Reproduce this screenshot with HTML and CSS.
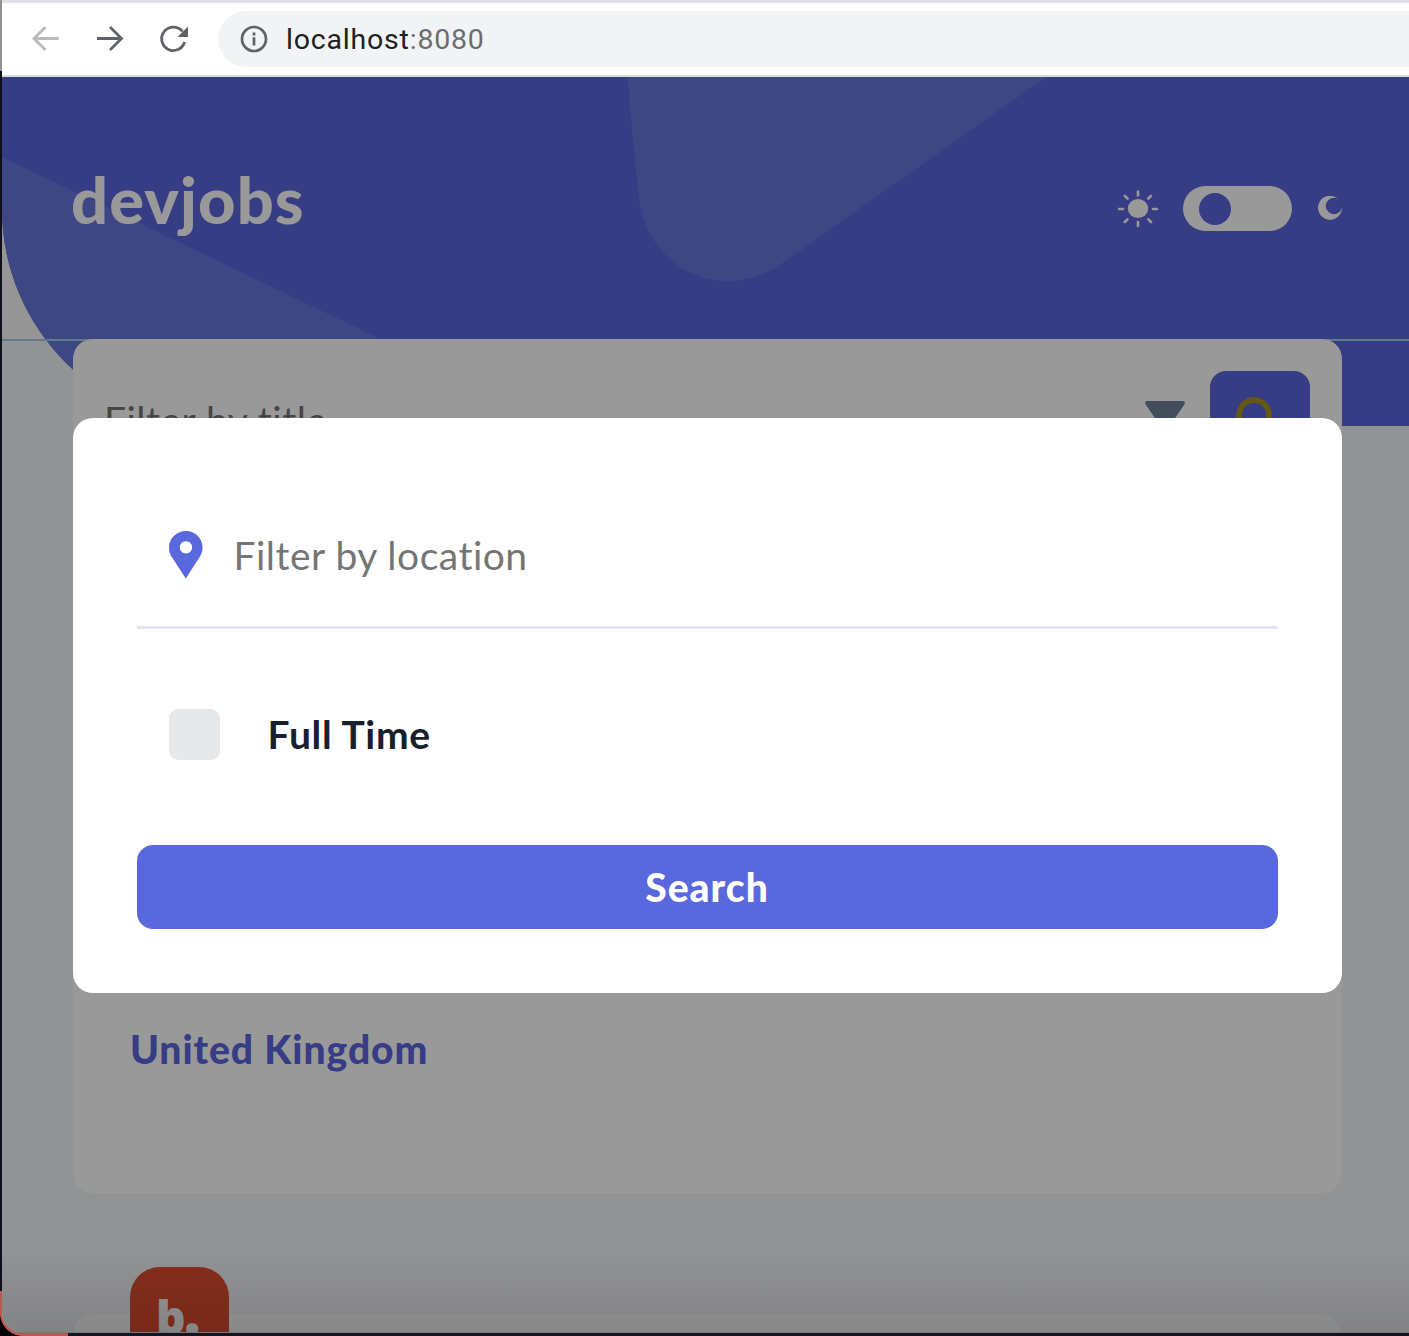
FILE: index.html
```html
<!DOCTYPE html>
<html lang="en">
<head>
<meta charset="utf-8">
<title>devjobs</title>
<link rel="stylesheet" href="styles.css">
</head>
<body>
<div class="desktop">
  <div class="browser">
    <nav class="toolbar">
      <svg class="tool back" width="32" height="32" viewBox="0 0 32 32"><path d="M28.800 15.500H5M15.500 4L4 15.500L15.500 27"/></svg>
      <svg class="tool" width="32" height="32" viewBox="0 0 32 32"><path d="M3 15.500H27M16 4L27.500 15.500L16 27"/></svg>
      <svg class="tool" width="32" height="32" viewBox="0 0 32 32"><path d="M26.600 19A11.700 11.700 0 1 1 24.500 8.500"/><path class="solid" d="M30 3.500V14H19.500Z"/></svg>
      <div class="address">
        <svg class="info" width="28" height="28" viewBox="0 0 28 28"><circle cx="14" cy="14" r="12"/><path d="M14 12.300V20.500M14 7.500V10.500"/></svg>
        <span class="url">localhost<span class="port">:8080</span></span>
      </div>
    </nav>
    <main class="viewport">
      <header class="header">
        <svg class="pattern" width="1407" height="349" viewBox="0 0 1407 349"><path d="M0 80L400 272.500V349H0Z"/><path d="M625 0L636 113C640 167 678 204 725 204C744 204 763 198 779 187L1044 0Z"/></svg>
        <h1 class="logo">devjobs</h1>
        <div class="theme">
          <svg width="40" height="38" viewBox="0 0 40 38"><ellipse cx="20" cy="18.500" rx="10.200" ry="9.600"/><path class="rays" d="M20 1.500V5.500M20 32V36M1 19H5M35 19H39M6.800 5.800L9.500 8.500M33 5.800L30.300 8.500M6.800 32L9.500 29.300M33 32L30.300 29.300"/></svg>
          <div class="switch"><span class="knob"></span></div>
          <svg class="moon" width="24" height="24" viewBox="0 0 24 24"><path d="M20 2.800A12 12 0 1 0 24 11.500A8.200 8.200 0 1 1 20 2.800Z"/></svg>
        </div>
      </header>
      <div class="rule"></div>
      <section class="content">
        <div class="searchbar">
          <span class="title-field">Filter by title</span>
          <svg width="40" height="40" viewBox="0 0 40 40"><path class="funnel" d="M1.500 0H38.500Q41 1 39 4L28 20L25 24V38L15 34V24L12 20L1 4Q-1 1 1.500 0Z"/></svg>
          <div class="search-icon"><svg width="48" height="48" viewBox="0 0 48 48"><circle cx="18" cy="18" r="15"/><path d="M29 29L44 44"/></svg></div>
        </div>
        <article class="job"><p class="country">United Kingdom</p></article>
        <article class="job next"><div class="company">b<span class="dot">.</span></div></article>
      </section>
      <div class="overlay">
        <form class="modal">
          <div class="location">
            <svg class="pin" width="34" height="48" viewBox="0 0 34 48"><path fill-rule="evenodd" d="M17 0C8 0 0 7 0 16.500C0 20.500 1.300 24 3.500 27L16.800 47.500L30 27C32.200 24 33.500 20.500 33.500 16.500C33.500 7 26 0 17 0ZM17 10.200A6.200 6.200 0 1 1 16.900 10.200Z"/></svg>
            <span class="location-field">Filter by location</span>
          </div>
          <label class="full"><span class="box"></span><span class="full-text">Full Time</span></label>
          <button class="submit" type="button"><span>Search</span></button>
        </form>
      </div>
      <div class="shade"></div>
    </main>
  </div>
</div>
</body>
</html>
```
FILE: styles.css
```css
* { box-sizing: border-box; }
body { margin: 0; background: #10101a; font-family: Lato, sans-serif; font-variant-ligatures: none; }
.desktop { height: 1336px; padding: 0 0 3px 2px; overflow: hidden; background: linear-gradient(#929292 71px, #10101a 71px, #10101a 1291px, transparent 1291px) 0 0 / 2px 100% no-repeat, radial-gradient(circle at 23px 1px, #b65c57 22.5px, #000 23.5px) 0 100% / 23px 24px no-repeat, linear-gradient(90deg, #b65c57 68px, #15151f 68px) 0 100% / 100% 3px no-repeat, #b65c57; }
.browser { height: 1333px; border-bottom-left-radius: 21px; overflow: hidden; background: #999; }
.toolbar { height: 77px; padding: 0 0 0 28px; display: flex; align-items: center; gap: 32px; background: #fff; border-top: 3px solid #dee1e6; border-bottom: 2px solid #dadcdb; }
.tool { flex: none; fill: none; stroke: #5f6368; stroke-width: 2.8; }
.back { stroke: #bababb; }
.solid { fill: #5f6368; stroke: none; }
.address { flex: 1; height: 56px; margin-left: -4px; padding-left: 22px; display: flex; align-items: center; gap: 18px; background: #f1f3f4; border-radius: 28px 0 0 28px; }
.info { fill: none; stroke: #5f6368; stroke-width: 2.7; }
.url { font: 28.5px Roboto, sans-serif; color: #202124; letter-spacing: .8px; }
.port { color: #6b6e70; }
.viewport { position: relative; height: 1256px; overflow: hidden; background: linear-gradient(#f8f8f8 262px, #f4f6f8 262px); }
.header { position: relative; height: 349px; padding: 0 67px 0 71px; display: flex; justify-content: space-between; align-items: flex-start; background: #5a67de; border-bottom-left-radius: 217px; overflow: hidden; }
.pattern { position: absolute; inset: 0; fill: #6976dc; }
.logo { position: relative; margin: 83px 0 0 -2px; font-size: 65px; line-height: 78px; font-weight: 900; letter-spacing: 1.1px; color: #fff; }
.theme { position: relative; margin-top: 109px; display: flex; align-items: center; gap: 25px; fill: #fff; }
.moon { margin: -2px 0 0 1px; }
.rays { stroke: #fff; stroke-width: 2.6; stroke-linecap: round; }
.switch { width: 109px; height: 45px; padding-left: 16px; display: flex; align-items: center; border-radius: 23px; background: #fff; }
.knob { width: 32px; height: 32px; margin-top: 1px; border-radius: 50%; background: #5a67de; }
.rule { position: absolute; left: 0; right: 0; top: 262px; height: 2px; background: #98d2e3; }
.content { position: relative; margin: -87px 67px 0 71px; }
.searchbar { height: 164px; padding: 0 32px; display: flex; align-items: center; background: #fff; border-radius: 20px; }
.title-field { flex: 1; margin: -2px 0 0 -1px; font-size: 39px; letter-spacing: .5px; color: #757575; }
.funnel { fill: #6e8098; }
.search-icon { width: 100px; height: 100px; margin-left: 25px; padding: 26px; background: #5a67de; border-radius: 16px; fill: none; stroke: #a9961c; stroke-width: 5.500; }
.job { height: 592px; margin-top: 98px; padding: 424px 57px 0; background: #fff; border-radius: 20px; }
.country { margin: 0; font-size: 39px; line-height: 48px; font-weight: 900; letter-spacing: .95px; color: #5a67de; }
.next { height: 400px; margin-top: 122px; padding: 0 57px; display: flex; }
.company { width: 99px; height: 99px; margin-top: -48px; padding-left: 26px; border-radius: 30px; background: #df4e31; color: #f8f8f8; font: 800 46px/99px "Open Sans", sans-serif; }
.dot { font-size: 60px; line-height: 0; margin-left: -2px; }
.overlay { position: absolute; inset: 0; padding: 340.500px 67.500px 0 70.500px; background: rgba(0,0,0,.4); }
.modal { height: 575px; padding: 64px; display: flex; flex-direction: column; background: #fff; border-radius: 20px; }
.location { height: 147px; padding: 0 32px; display: flex; align-items: center; gap: 32px; border-bottom: 3px solid #e3e4ed; fill: #5968dc; }
.pin { margin-top: 3px; }
.location-field { margin: 2px 0 0 -1px; font-size: 39px; letter-spacing: .5px; color: #757575; }
.full { margin-top: 80px; padding-left: 32px; display: flex; align-items: center; gap: 48px; }
.box { width: 51px; height: 51px; border-radius: 9px; background: #e6e8e9; }
.full-text { font-size: 39px; font-weight: 700; line-height: 48px; letter-spacing: .7px; color: #19202d; }
.submit { width: 100%; height: 84px; margin-top: auto; border: 0; border-radius: 16px; background: #5968dc; color: #fff; font: 900 39px Lato, sans-serif; letter-spacing: 1px; }
.shade { position: absolute; left: 0; right: 0; bottom: 0; height: 82px; background: linear-gradient(rgba(0,0,0,0), rgba(0,0,0,.11)); border-bottom: 1px solid #777; }
```
